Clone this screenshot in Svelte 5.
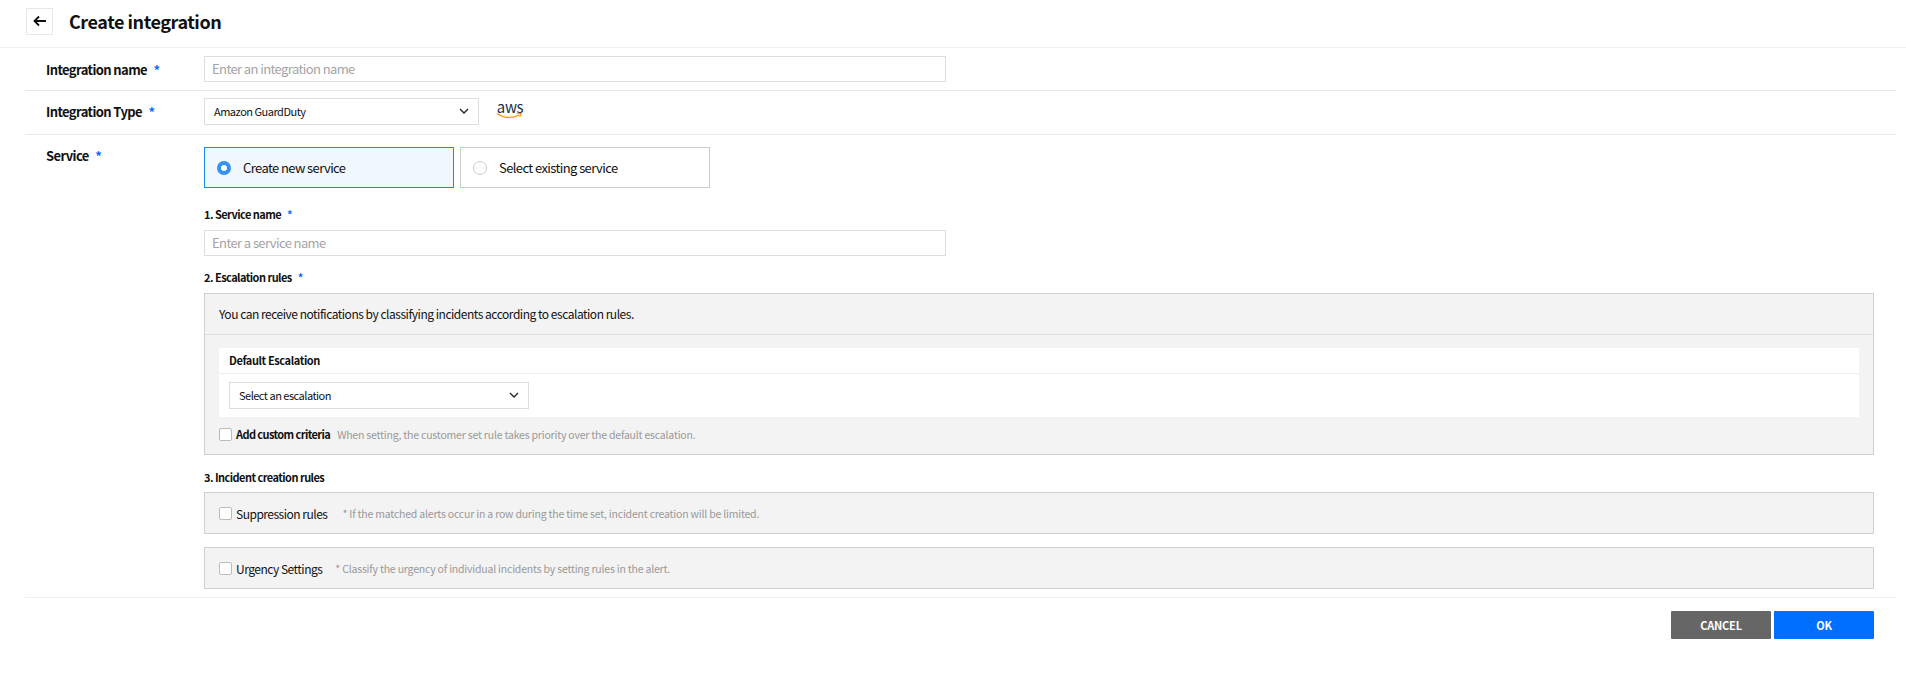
<script>
  let serviceMode = $state('new');
  let customCriteria = $state(false);
  let suppression = $state(false);
  let urgency = $state(false);
</script>

<div class="page">
  <header class="top">
    <button class="back" aria-label="Back">
      <svg width="14" height="12" viewBox="0 0 14 12" fill="none" stroke="#111" stroke-width="1.8">
        <path d="M13 6H1.5M6 1.5 1.5 6 6 10.5" />
      </svg>
    </button>
    <h1>Create integration</h1>
  </header>

  <div class="form">
    <div class="row row-name">
      <div class="label">Integration name <span class="req">*</span></div>
      <input class="text" placeholder="Enter an integration name" />
    </div>

    <div class="row row-type">
      <div class="label">Integration Type <span class="req">*</span></div>
      <div class="select type-select">
        <span>Amazon GuardDuty</span>
        <svg class="chev" width="10" height="6" viewBox="0 0 10 6" fill="none" stroke="#222" stroke-width="1.3"><path d="M1 1l4 4 4-4" /></svg>
      </div>
      <div class="aws">
        <span>aws</span>
        <svg width="28" height="8" viewBox="0 0 28 8" fill="none">
          <path d="M1 1.500c7 5 16 5 22 1.500" stroke="#f90" stroke-width="1.300" />
          <path d="M21 1.200l4 .3-1.300 3.500" stroke="#f90" stroke-width="1.100" />
        </svg>
      </div>
    </div>

    <div class="row row-service">
      <div class="label">Service <span class="req">*</span></div>
      <div class="service">
        <div class="cards">
          <label class="card" class:on={serviceMode === 'new'}>
            <input type="radio" bind:group={serviceMode} value="new" />
            <span class="dot"></span>
            Create new service
          </label>
          <label class="card" class:on={serviceMode === 'existing'}>
            <input type="radio" bind:group={serviceMode} value="existing" />
            <span class="dot"></span>
            Select existing service
          </label>
        </div>

        <div class="sub first">1. Service name <span class="req">*</span></div>
        <input class="text" placeholder="Enter a service name" />

        <div class="sub second">2. Escalation rules <span class="req">*</span></div>
        <div class="box">
          <div class="box-head">You can receive notifications by classifying incidents according to escalation rules.</div>
          <div class="box-body">
            <div class="inner">
              <div class="inner-title">Default Escalation</div>
              <div class="inner-body">
                <div class="select esc-select">
                  <span>Select an escalation</span>
                  <svg class="chev" width="10" height="6" viewBox="0 0 10 6" fill="none" stroke="#222" stroke-width="1.3"><path d="M1 1l4 4 4-4" /></svg>
                </div>
              </div>
            </div>
            <label class="check custom">
              <input type="checkbox" bind:checked={customCriteria} />
              <b>Add custom criteria</b>
              <span class="hint">When setting, the customer set rule takes priority over the default escalation.</span>
            </label>
          </div>
        </div>

        <div class="sub third">3. Incident creation rules</div>
        <div class="box option">
          <label class="check">
            <input type="checkbox" bind:checked={suppression} />
            <span class="name sup">Suppression rules</span>
            <span class="hint">* If the matched alerts occur in a row during the time set, incident creation will be limited.</span>
          </label>
        </div>
        <div class="box option">
          <label class="check">
            <input type="checkbox" bind:checked={urgency} />
            <span class="name urg">Urgency Settings</span>
            <span class="hint">* Classify the urgency of individual incidents by setting rules in the alert.</span>
          </label>
        </div>
      </div>
    </div>
  </div>

  <footer class="actions">
    <button class="btn cancel">CANCEL</button>
    <button class="btn ok">OK</button>
  </footer>
</div>

<style>
  :global(body) {
    margin: 0;
    background: #fff;
  }

  .page {
    font-family: "Noto Sans CJK KR", "Noto Sans", sans-serif;
    color: #111;
    font-size: 13px;
  }

  .top {
    display: flex;
    align-items: center;
    height: 42px;
    padding: 0 0 5px 26px;
    gap: 16px;
    border-bottom: 1px solid #eee;
  }

  .back {
    width: 27px;
    height: 27px;
    padding: 0;
    display: flex;
    align-items: center;
    justify-content: center;
    background: #fff;
    border: 1px solid #e8e8e8;
  }

  h1 {
    margin: 0;
    font-size: 18px;
    font-weight: 700;
    line-height: 26px;
    letter-spacing: -0.45px;
  }

  .form {
    margin: 0 10px 0 25px;
  }

  .row {
    display: flex;
    padding-left: 21px;
    border-bottom: 1px solid #e8e8e8;
  }

  .row-name {
    height: 42px;
    align-items: center;
  }

  .row-type {
    height: 41px;
    padding-bottom: 2px;
    align-items: center;
  }

  .row-service {
    border-bottom: 1px solid #eee;
    padding-right: 22px;
    padding-top: 12px;
    padding-bottom: 8px;
  }

  .label {
    width: 158px;
    flex: none;
    font-size: 13px;
    font-weight: 700;
    letter-spacing: -0.6px;
  }

  .row-service .label {
    line-height: 18px;
  }

  .req {
    color: #0a6cff;
    margin-left: 4px;
  }

  .text {
    box-sizing: border-box;
    width: 742px;
    height: 26px;
    display: block;
    padding: 0 7px 2px;
    border: 1px solid #ddd;
    font: inherit;
    letter-spacing: -0.6px;
    outline: none;
  }

  .text::placeholder {
    color: #a4a4a4;
  }

  .select {
    box-sizing: border-box;
    height: 27px;
    display: flex;
    align-items: center;
    justify-content: space-between;
    padding: 0 9px 2px;
    border: 1px solid #ddd;
    background: #fff;
    font-size: 11px;
    letter-spacing: -0.5px;
  }

  .type-select {
    width: 275px;
  }

  .esc-select {
    width: 300px;
  }

  .aws {
    margin-left: 17px;
    width: 28px;
    display: flex;
    flex-direction: column;
    align-items: center;
    line-height: 13px;
    font-size: 15px;
    letter-spacing: -0.4px;
    color: #232f3e;
    margin-top: -3px;
  }

  .aws svg {
    margin-top: -1px;
  }

  .service {
    flex: 1;
  }

  .cards {
    display: flex;
    gap: 6px;
  }

  .card {
    box-sizing: border-box;
    width: 250px;
    height: 41px;
    display: flex;
    align-items: center;
    gap: 12px;
    padding-left: 12px;
    border: 1px solid #ccc;
    font-size: 13px;
    letter-spacing: -0.6px;
  }

  .card.on {
    background: #f0f7ff;
    border-color: #1e88f5;
  }

  .card input {
    display: none;
  }

  .dot {
    box-sizing: border-box;
    width: 14px;
    height: 14px;
    border-radius: 50%;
    border: 1px solid #ccc;
    background: #fff;
  }

  .on .dot {
    border: 4.5px solid #3491f5;
  }

  .sub {
    font-size: 11px;
    font-weight: 700;
    line-height: 16px;
    letter-spacing: -0.55px;
  }

  .first {
    margin-top: 18px;
    margin-bottom: 8px;
  }

  .second {
    margin-top: 13px;
    margin-bottom: 8px;
  }

  .third {
    margin-top: 14px;
    margin-bottom: 7px;
  }

  .box {
    background: #f3f3f3;
    border: 1px solid #d0d0d0;
  }

  .box-head {
    height: 40px;
    line-height: 40px;
    padding-left: 14px;
    font-size: 12px;
    letter-spacing: -0.48px;
    border-bottom: 1px solid #ddd;
  }

  .box-body {
    padding: 13px 14px 0;
    height: 119px;
    box-sizing: border-box;
  }

  .inner {
    background: #fff;
  }

  .inner-title {
    height: 25px;
    line-height: 24px;
    padding-left: 10px;
    font-size: 11px;
    font-weight: 700;
    letter-spacing: -0.4px;
    border-bottom: 1px solid #eee;
  }

  .inner-body {
    padding: 8px 10px 8px;
  }

  .check {
    display: flex;
    align-items: center;
    font-size: 12px;
  }

  .check input {
    appearance: none;
    box-sizing: border-box;
    width: 13px;
    height: 13px;
    margin: 0 4px 0 0;
    background: #fff;
    border: 1px solid #bbb;
    border-radius: 2px;
  }

  .custom {
    margin-top: 9px;
  }

  .custom b {
    font-weight: 700;
    font-size: 11px;
    letter-spacing: -0.6px;
  }

  .hint {
    color: #999;
    font-size: 10.5px;
    letter-spacing: -0.2px;
    margin-left: 7px;
  }

  .option {
    box-sizing: border-box;
    height: 42px;
    display: flex;
    align-items: center;
    padding-left: 14px;
  }

  .option + .option {
    margin-top: 13px;
  }

  .name {
    font-size: 12px;
    letter-spacing: -0.5px;
  }

  .sup {
    margin-right: 8px;
  }

  .urg {
    margin-right: 6px;
  }

  .actions {
    display: flex;
    justify-content: flex-end;
    gap: 3px;
    padding: 13px 32px 0 0;
  }

  .btn {
    width: 100px;
    height: 28px;
    border: none;
    border-radius: 1px;
    color: #fff;
    font: inherit;
    font-size: 11px;
    font-weight: 700;
    letter-spacing: -0.2px;
  }

  .cancel {
    background: #666;
  }

  .ok {
    background: #006eff;
  }
</style>
